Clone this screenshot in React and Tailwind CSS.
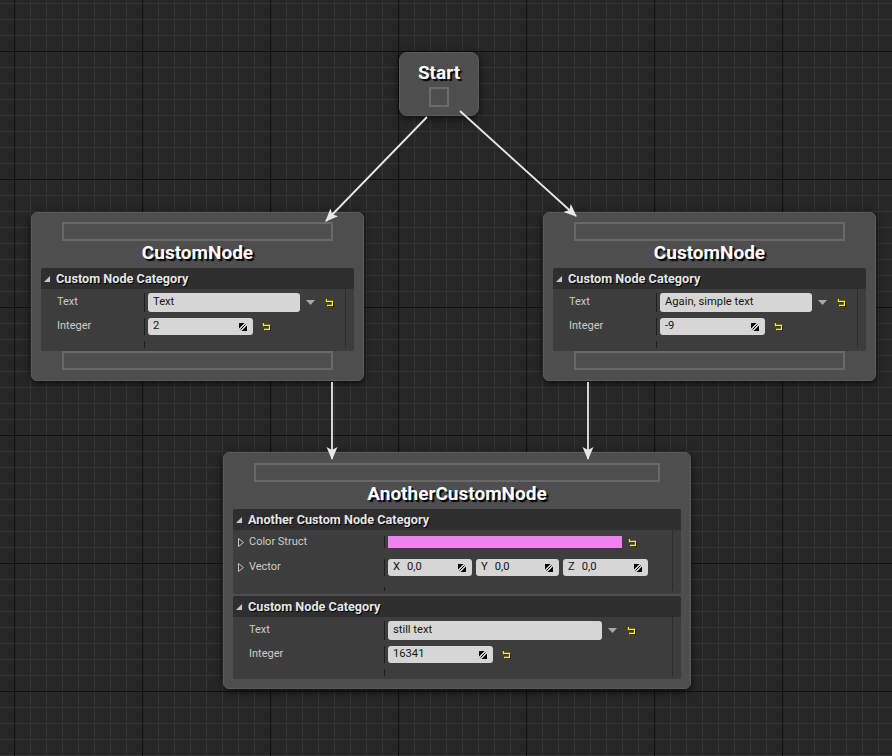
import React from "react";

const ResetIcon = () => (
  <svg width="10" height="9" viewBox="0 0 10 9" className="shrink-0">
    <path d="M2.5 1 V3.5 H8.5 V7.5 H3" fill="none" stroke="#000" strokeWidth="1.3" transform="translate(0.8 0.8)" />
    <path d="M2.5 1 V3.5 H8.5 V7.5 H3" fill="none" stroke="#f5f500" strokeWidth="1.3" />
  </svg>
);

const SpinIcon = () => (
  <svg width="8" height="8" viewBox="0 0 8 8" className="shrink-0">
    <path d="M0 0 H5.5 L0 5.5 Z M8 8 H2.5 L8 2.5 Z" fill="#000" />
    <path d="M1.5 6.5 L6.5 1.5" stroke="#000" strokeWidth="1" />
  </svg>
);

const DropArrow = () => (
  <svg width="9" height="5" viewBox="0 0 9 5" className="shrink-0">
    <path d="M0 0 H9 L4.5 5 Z" fill="#a8a8a8" />
  </svg>
);

const CollapseIcon = () => (
  <svg width="6" height="6" viewBox="0 0 6 6" className="shrink-0">
    <path d="M6 0 V6 H0 Z" fill="#c8c8c8" />
  </svg>
);

const ExpandIcon = () => (
  <svg width="6" height="9" viewBox="0 0 6 9" className="shrink-0">
    <path d="M0.5 0.5 L5.5 4.5 L0.5 8.5 Z" fill="none" stroke="#c4c4c4" strokeWidth="1" />
  </svg>
);

const PinBar = ({ className = "" }) => (
  <div className={`h-[19px] border-2 border-[#686868] ${className}`} />
);

const Header = ({ children }) => (
  <div className="h-[21px] bg-[#2e2e2e] flex items-center pl-[3px] gap-[6px] rounded-t-[2px]">
    <CollapseIcon />
    <span className="text-[12.7px] font-bold text-[#e6e6e6] [text-shadow:1px_1px_0_#000]">{children}</span>
  </div>
);

const Label = ({ children, w, expand }) => (
  <div className={`${w} h-full flex items-center shrink-0 border-r border-[#1e1e1e] ${expand ? "pl-[5px] gap-[5px]" : "pl-[16px]"}`}>
    {expand && <ExpandIcon />}
    <span className="text-[11px] text-[#cccccc]">{children}</span>
  </div>
);

const TextBox = ({ w, children }) => (
  <div className={`${w} h-full bg-[#d6d6d6] rounded-[3px] flex items-center px-[5px] text-[11.2px] text-[#141414]`}>
    {children}
  </div>
);

const NumBox = ({ w, children, axis }) => (
  <div className={`${w} h-[17px] bg-[#d6d6d6] rounded-[3px] flex items-center justify-between pl-[5px] pr-[6px] text-[11.2px] text-[#141414]`}>
    <span className="flex gap-[7px]">
      {axis && <span>{axis}</span>}
      <span>{children}</span>
    </span>
    <SpinIcon />
  </div>
);

const Panel = ({ title, children, className = "" }) => (
  <div className={`relative rounded-[2px] overflow-hidden bg-[#3d3d3d] ${className}`}>
    <Header>{title}</Header>
    {children}
    <div className="absolute right-[8px] top-0 bottom-[3px] w-px bg-[#2c2c2c]" />
  </div>
);

const TextIntRows = ({ labelW, textW, textValue, intValue, bodyH }) => (
  <div className={`flex flex-col pt-[4px] gap-[6px] ${bodyH}`}>
    <div className="flex items-center h-[19px]">
      <Label w={labelW}>Text</Label>
      <div className="flex items-center h-full pl-[3px]">
        <TextBox w={textW}>{textValue}</TextBox>
        <div className="ml-[6px]"><DropArrow /></div>
        <div className="ml-[9px]"><ResetIcon /></div>
      </div>
    </div>
    <div className="flex items-center h-[17px]">
      <Label w={labelW}>Integer</Label>
      <div className="flex items-center h-full pl-[3px]">
        <NumBox w="w-[105px]">{intValue}</NumBox>
        <div className="ml-[8px]"><ResetIcon /></div>
      </div>
    </div>
    <div className="flex-1 flex">
      <div className={`${labelW} border-r border-[#1e1e1e] mb-[3px]`} />
    </div>
  </div>
);

const NodeTitle = ({ children, pt = "pt-[1px]" }) => (
  <div className={`h-[27px] ${pt} text-center text-[19px] leading-[22px] font-bold text-white [text-shadow:2px_2px_1px_#000]`}>
    {children}
  </div>
);

const nodeShell =
  "absolute bg-[#4e4e4e] border border-[#5a5a5a] rounded-[6px] shadow-[0_2px_8px_rgba(0,0,0,0.7)]";

const CustomNode = ({ left, textValue, intValue }) => (
  <div className={`${nodeShell} ${left} top-[212px] w-[333px] h-[169px] pt-[9px] px-[9px] flex flex-col`}>
    <PinBar className="mx-[21px]" />
    <NodeTitle>CustomNode</NodeTitle>
    <Panel title="Custom Node Category" className="h-[83px]">
      <TextIntRows labelW="w-[104px]" textW="w-[152px]" textValue={textValue} intValue={intValue} bodyH="h-[62px]" />
    </Panel>
    <PinBar className="mx-[21px]" />
  </div>
);

const Arrows = () => (
  <svg className="absolute inset-0 pointer-events-none" width="892" height="756">
    <defs>
      <marker id="head" markerUnits="userSpaceOnUse" markerWidth="14" markerHeight="12" refX="12" refY="5.5" orient="auto">
        <path d="M0 0 L13 5.5 L0 11 L3 5.5 Z" fill="#e8e8e8" />
      </marker>
    </defs>
    <g stroke="#e8e8e8" strokeWidth="1.8" fill="none">
      <line x1="427" y1="117" x2="326" y2="221" markerEnd="url(#head)" />
      <line x1="460" y1="111" x2="576" y2="216" markerEnd="url(#head)" />
      <line x1="332" y1="382" x2="332" y2="459" markerEnd="url(#head)" />
      <line x1="588" y1="382" x2="588" y2="459" markerEnd="url(#head)" />
    </g>
  </svg>
);

const Grid = () => (
  <svg className="absolute inset-0" width="892" height="756">
    <defs>
      <pattern id="minor" width="16" height="16" patternUnits="userSpaceOnUse" x="14" y="3">
        <path d="M0.5 0 V16 M0 0.5 H16" stroke="#353535" strokeWidth="1" />
      </pattern>
      <pattern id="major" width="128" height="128" patternUnits="userSpaceOnUse" x="14" y="51">
        <path d="M0.5 0 V128 M0 0.5 H128" stroke="#101010" strokeWidth="1.2" />
      </pattern>
    </defs>
    <rect width="892" height="756" fill="#262626" />
    <rect width="892" height="756" fill="url(#minor)" />
    <rect width="892" height="756" fill="url(#major)" />
  </svg>
);

export default function App() {
  return (
    <div className="relative w-[892px] h-[756px] overflow-hidden bg-[#262626] font-['Roboto','Liberation_Sans',sans-serif]">
      <Grid />

      <div className={`${nodeShell} left-[399px] top-[52px] w-[80px] h-[64px] rounded-[8px] flex flex-col items-center pt-[9px]`}>
        <div className="text-[19px] leading-[22px] font-bold text-white [text-shadow:2px_2px_1px_#000]">Start</div>
        <div className="mt-[3px] w-[20px] h-[20px] border-2 border-[#6a6a6a]" />
      </div>

      <CustomNode left="left-[31px]" textValue="Text" intValue="2" />
      <CustomNode left="left-[543px]" textValue="Again, simple text" intValue="-9" />

      <div className={`${nodeShell} left-[223px] top-[452px] w-[468px] h-[237px] pt-[10px] px-[9px] flex flex-col`}>
        <PinBar className="mx-[21px]" />
        <NodeTitle pt="pt-[1px]">AnotherCustomNode</NodeTitle>
        <Panel title="Another Custom Node Category" className="h-[85px]">
          <div className="flex flex-col pt-[6px] gap-[11px] h-[64px]">
            <div className="flex items-center h-[12px]">
              <Label w="w-[152px]" expand>Color Struct</Label>
              <div className="flex items-center h-full pl-[3px]">
                <div className="w-[234px] h-[12px] bg-[#ee82ee]" />
                <div className="ml-[5px]"><ResetIcon /></div>
              </div>
            </div>
            <div className="flex items-center h-[17px]">
              <Label w="w-[152px]" expand>Vector</Label>
              <div className="flex items-center h-full pl-[3px] gap-[4px]">
                <NumBox w="w-[84px]" axis="X">0,0</NumBox>
                <NumBox w="w-[83px]" axis="Y">0,0</NumBox>
                <NumBox w="w-[85px]" axis="Z">0,0</NumBox>
              </div>
            </div>
            <div className="flex-1 flex">
              <div className="w-[152px] border-r border-[#1e1e1e] mb-[3px]" />
            </div>
          </div>
        </Panel>
        <Panel title="Custom Node Category" className="h-[83px] mt-[2px]">
          <TextIntRows labelW="w-[152px]" textW="w-[214px]" textValue="still text" intValue="16341" bodyH="h-[62px]" />
        </Panel>
      </div>

      <Arrows />
    </div>
  );
}
